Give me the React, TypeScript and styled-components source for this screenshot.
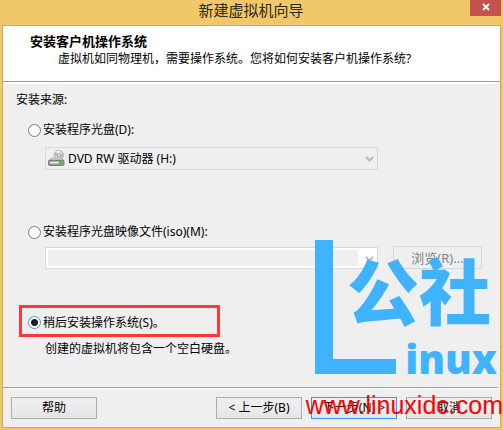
import React from "react";
import styled, { createGlobalStyle } from "styled-components";

const GlobalStyle = createGlobalStyle`
  * { box-sizing: border-box; }
  html, body { margin: 0; padding: 0; }
  body, button, select {
    font-family: "Noto Sans", "Noto Sans CJK SC", sans-serif;
    font-size: 12px;
    line-height: 16px;
    color: #000;
  }
`;

const Window = styled.main`
  position: relative;
  display: flex;
  flex-direction: column;
  min-height: 100vh;
  padding: 0 2px 2px;
  background: #f0c869;
  overflow: hidden;
`;

const TitleBar = styled.header`
  display: grid;
  grid-template-columns: 30px 1fr 31px;
  height: 25px;
`;

const Title = styled.h1`
  grid-column: 2;
  margin: 0;
  font-size: 15px;
  font-weight: 400;
  line-height: 20px;
  text-align: center;
  color: #2b2722;
`;

const CloseButton = styled.button`
  display: grid;
  place-items: center;
  height: 16px;
  padding: 0 0 2px;
  border: 0;
  background: #c75050;
`;

const Panel = styled.form`
  flex: 1;
  display: flex;
  flex-direction: column;
  border: 1px solid #cdaa56;
  background: #efefef;
`;

const Intro = styled.section`
  height: 58px;
  padding: 6px 27px 0;
  background: #fff;
  border-bottom: 2px solid #fff;
  box-shadow: inset 0 -1px 0 #9e9e9e;
`;

const Heading = styled.h2`
  margin: 0;
  font-size: 13px;
  font-weight: 700;
  line-height: 18px;
`;

const Summary = styled.p`
  margin: 0;
  padding-left: 28px;
  line-height: 18px;
`;

const Options = styled.fieldset`
  flex: 1;
  min-width: 0;
  margin: 0;
  padding: 8px 18px 24px 13px;
  border: 0;
`;

const Legend = styled.div`
  margin-bottom: 14px;
`;

const Choice = styled.label`
  display: flex;
  align-items: center;
  gap: 2px;
  padding-left: 12px;
  height: 16px;
`;

const Radio = styled.input`
  appearance: none;
  flex: none;
  width: 13px;
  height: 13px;
  margin: 0;
  border: 1px solid #7c7c7c;
  border-radius: 50%;
  background: #fff;
  &:checked {
    border-color: #4793d8;
    background: radial-gradient(circle, #1c1c1c 3px, #fff 4px);
  }
`;

const SourceRow = styled.div`
  display: grid;
  grid-template-columns: 1fr 89px;
  gap: 15px;
  align-items: center;
  margin: 9px 0 54px;
  padding-left: 29px;
`;

const ImageRow = styled(SourceRow)`
  margin: 6px 0 36px;
`;

const Combo = styled.div`
  position: relative;
`;

const ComboSelect = styled.select<{ $editable?: boolean }>`
  display: block;
  appearance: none;
  width: 100%;
  height: ${(p) => (p.$editable ? 22 : 23)}px;
  padding: 0 20px 0 22px;
  border: 1px solid #d9d9d9;
  border-radius: 0;
  background: #efefef;
  opacity: 1;
  color: #000;
  box-shadow: ${(p) => (p.$editable ? "inset 0 0 0 2px #fff, inset -19px 0 0 #fff" : "none")};
`;

const DriveMark = styled.span`
  position: absolute;
  left: 3px;
  top: 3px;
  display: flex;
  pointer-events: none;
`;

const ArrowMark = styled.span`
  position: absolute;
  right: 4px;
  top: 9px;
  display: flex;
  pointer-events: none;
`;

const Annotated = styled.div`
  display: flex;
  align-items: center;
  width: 201px;
  height: 32px;
  margin-left: 3px;
  padding-top: 3px;
  border: 3px solid #ff3737;
  & > label { padding-left: 6px; }
`;

const Note = styled.p`
  margin: 4px 0 0;
  padding-left: 29px;
`;

const Footer = styled.footer`
  display: flex;
  gap: 9px;
  margin-right: 2px;
  padding: 9px 6px 8px 8px;
  border-top: 1px solid #9e9e9e;
  box-shadow: inset 0 1px 0 #fff;
`;

const Button = styled.button<{ $primary?: boolean }>`
  height: 22px;
  width: 86px;
  padding: 0;
  border: 1px solid ${(p) => (p.$primary ? "#3399ff" : "#acacac")};
  background: linear-gradient(#f0f0f0, #e5e5e5);
  white-space: nowrap;
  &:disabled {
    width: 100%;
    height: 23px;
    border-color: #d9d9d9;
    background: #efefef;
    color: #838383;
    font-size: 13px;
  }
`;

const HelpButton = styled(Button)`
  margin-right: auto;
`;

const Watermark = styled.div`
  position: absolute;
  right: 0;
  bottom: 8px;
  width: 199px;
  height: 182px;
  pointer-events: none;
  white-space: nowrap;
`;

const BrandStroke = styled.span`
  position: absolute;
  left: 11px;
  top: 0;
  width: 81px;
  height: 134px;
  border-left: 18px solid #40b3ff;
  border-bottom: 15px solid #40b3ff;
`;

const BrandName = styled.span`
  position: absolute;
  left: 43px;
  top: 8px;
  font: 900 72px/80px "Noto Sans CJK SC", sans-serif;
  color: #40b3ff;
`;

const BrandLatin = styled.span`
  position: absolute;
  right: 6px;
  top: 93px;
  font: 800 40px/52px "Open Sans", sans-serif;
  color: #40b3ff;
`;

const SiteAddress = styled.span`
  position: absolute;
  right: 0;
  top: 147px;
  font: 400 25px/36px "Liberation Sans", sans-serif;
  color: #fb0007;
`;

const Arrow = () => (
  <ArrowMark>
    <svg width="9" height="6" viewBox="0 0 9 6" aria-hidden="true">
      <path d="M1 1 L4.5 4.5 L8 1" fill="none" stroke="#b9b9b9" strokeWidth="2" />
    </svg>
  </ArrowMark>
);

const DriveIcon = () => (
  <svg width="17" height="17" viewBox="0 0 17 17" aria-hidden="true">
    <circle cx="10.8" cy="5" r="4.6" fill="#d4d6d9" stroke="#a4a6ab" strokeWidth=".8" />
    <path d="M10.8 5 8.4 1.2Q10 .4 11.6 .8Z" fill="#f7f7f7" />
    <path d="M10.8 5 14.9 4Q15 6.6 13.5 8.4Z" fill="#a7c8a5" />
    <path d="M10.8 5 6.8 6 7.5 2.6Z" fill="#bcaed0" />
    <circle cx="10.8" cy="5" r="1.4" fill="#fff" stroke="#888" strokeWidth=".7" />
    <path d="M3 8H14L15.8 10.5H.8Z" fill="#dedede" stroke="#a0a0a0" strokeWidth=".7" />
    <rect x=".6" y="10.2" width="15.4" height="5.2" rx="1.2" fill="#a2a2a2" stroke="#5c5c5c" strokeWidth=".8" />
    <path d="M2.5 12.6H10.5" stroke="#fff" strokeWidth="1.4" />
    <rect x="12" y="10.4" width="2" height="3.8" fill="#35c42f" />
  </svg>
);

export default function App() {
  return (
    <>
      <GlobalStyle />
      <Window>
        <TitleBar>
          <Title>新建虚拟机向导</Title>
          <CloseButton type="button" aria-label="关闭">
            <svg width="8" height="8" viewBox="0 0 8 8" aria-hidden="true">
              <path d="M1 1 7 7M7 1 1 7" stroke="#fff" strokeWidth="1.8" />
            </svg>
          </CloseButton>
        </TitleBar>
        <Panel onSubmit={(e) => e.preventDefault()}>
          <Intro>
            <Heading>安装客户机操作系统</Heading>
            <Summary>虚拟机如同物理机，需要操作系统。您将如何安装客户机操作系统?</Summary>
          </Intro>
          <Options aria-labelledby="source-title">
            <Legend id="source-title">安装来源:</Legend>
            <Choice>
              <Radio type="radio" name="source" value="disc" />
              安装程序光盘(D):
            </Choice>
            <SourceRow>
              <Combo>
                <ComboSelect disabled aria-label="安装程序光盘">
                  <option>DVD RW 驱动器 (H:)</option>
                </ComboSelect>
                <DriveMark><DriveIcon /></DriveMark>
                <Arrow />
              </Combo>
            </SourceRow>
            <Choice>
              <Radio type="radio" name="source" value="iso" />
              安装程序光盘映像文件(iso)(M):
            </Choice>
            <ImageRow>
              <Combo>
                <ComboSelect $editable disabled aria-label="安装程序光盘映像文件" />
                <Arrow />
              </Combo>
              <Button type="button" disabled>浏览(R)...</Button>
            </ImageRow>
            <Annotated>
              <Choice>
                <Radio type="radio" name="source" value="later" defaultChecked />
                稍后安装操作系统(S)。
              </Choice>
            </Annotated>
            <Note>创建的虚拟机将包含一个空白硬盘。</Note>
          </Options>
          <Footer>
            <HelpButton type="button">帮助</HelpButton>
            <Button type="button">&lt; 上一步(B)</Button>
            <Button type="submit" $primary>下一步(N) &gt;</Button>
            <Button type="button">取消</Button>
          </Footer>
        </Panel>
        <Watermark>
          <BrandStroke role="img" aria-label="L" />
          <BrandName>公社</BrandName>
          <BrandLatin>inux</BrandLatin>
          <SiteAddress>www.linuxidc.com</SiteAddress>
        </Watermark>
      </Window>
    </>
  );
}
